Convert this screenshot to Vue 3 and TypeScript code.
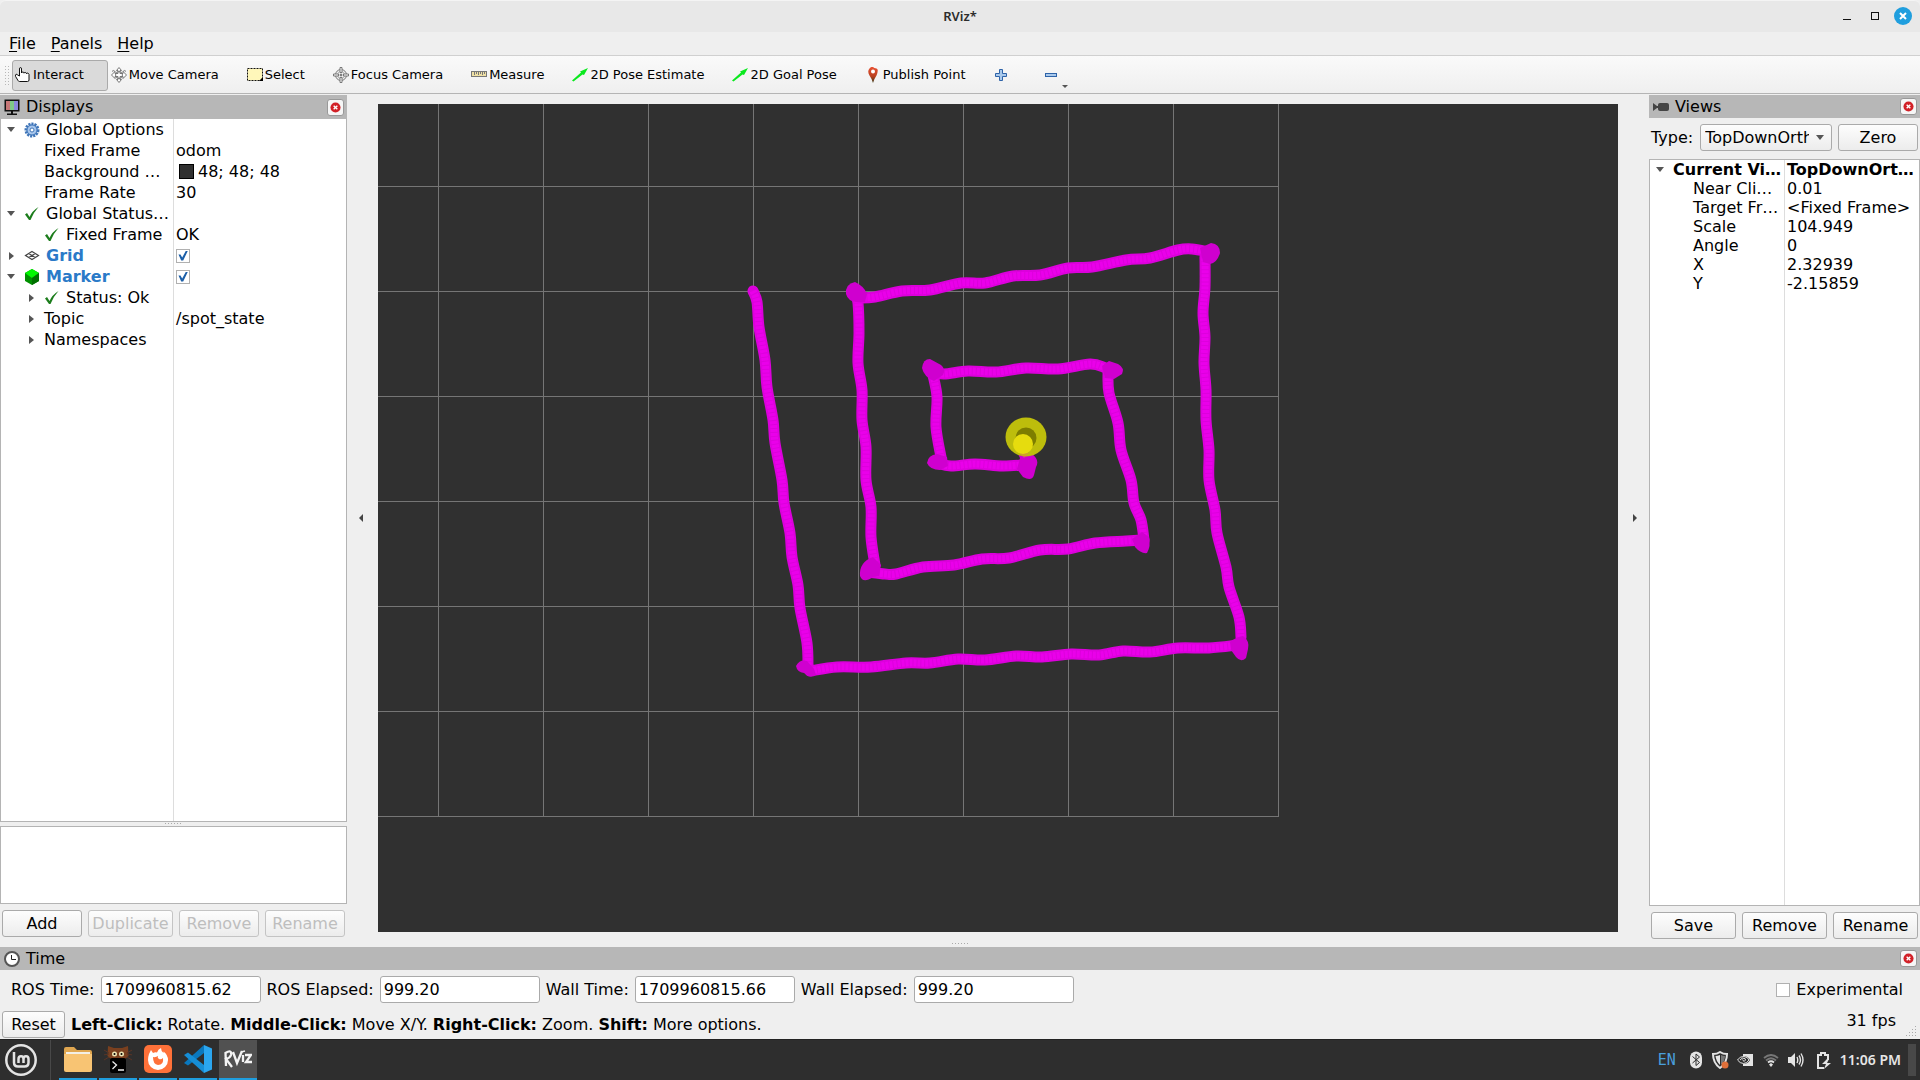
<script setup lang="ts">
import { ref } from 'vue'

interface Tool {
  id: string
  label: string
}

interface Property {
  name: string
  value?: string
  level: number
  arrow?: 'open' | 'closed'
  icon?: 'gear' | 'check' | 'grid' | 'cube'
  link?: boolean
  swatch?: boolean
  checkable?: boolean
}

const tools: Tool[] = [
  { id: 'interact', label: 'Interact' },
  { id: 'move', label: 'Move Camera' },
  { id: 'select', label: 'Select' },
  { id: 'focus', label: 'Focus Camera' },
  { id: 'measure', label: 'Measure' },
  { id: 'pose', label: '2D Pose Estimate' },
  { id: 'pose', label: '2D Goal Pose' },
  { id: 'point', label: 'Publish Point' },
]

const displays: Property[] = [
  { name: 'Global Options', level: 0, arrow: 'open', icon: 'gear' },
  { name: 'Fixed Frame', value: 'odom', level: 1 },
  { name: 'Background …', value: '48; 48; 48', level: 1, swatch: true },
  { name: 'Frame Rate', value: '30', level: 1 },
  { name: 'Global Status…', level: 0, arrow: 'open', icon: 'check' },
  { name: 'Fixed Frame', value: 'OK', level: 1, icon: 'check' },
  { name: 'Grid', level: 0, arrow: 'closed', icon: 'grid', link: true, checkable: true },
  { name: 'Marker', level: 0, arrow: 'open', icon: 'cube', link: true, checkable: true },
  { name: 'Status: Ok', level: 1, arrow: 'closed', icon: 'check' },
  { name: 'Topic', value: '/spot_state', level: 1, arrow: 'closed' },
  { name: 'Namespaces', level: 1, arrow: 'closed' },
]

const viewProps = [
  ['Near Cli…', '0.01'],
  ['Target Fr…', '<Fixed Frame>'],
  ['Scale', '104.949'],
  ['Angle', '0'],
  ['X', '2.32939'],
  ['Y', '-2.15859'],
]

const times = [
  { id: 'ros-time', label: 'ROS Time:', value: '1709960815.62' },
  { id: 'ros-elapsed', label: 'ROS Elapsed:', value: '999.20' },
  { id: 'wall-time', label: 'Wall Time:', value: '1709960815.66' },
  { id: 'wall-elapsed', label: 'Wall Elapsed:', value: '999.20' },
]

const enabled = ref<Record<string, boolean>>({ Grid: true, Marker: true })
const experimental = ref(false)

const gridX = Array.from({ length: 9 }, (_, i) => 60.5 + i * 105)
const gridY = Array.from({ length: 7 }, (_, i) => 82.5 + i * 105)

// Positions of the robot on each leg of the inward spiral.
const legs = [
  '375,187 379,198 381,223 387,256 389,283 395,316 397,339 404,376 406,399 412,429 414,453 420,481 422,504 429,539 430,564',
  '432,567 459,563 493,563 528,559 552,559 580,555 607,556 638,552 664,553 693,550 721,551 745,547 772,548 800,544 831,544 860,541',
  '863,533 861,513 851,483 848,463 839,429 837,406 831,376 831,346 828,316 828,286 826,259 827,233 825,209 827,183 827,153',
  '831,148 814,145 800,146 772,154 748,156 714,163 690,164 662,171 635,172 607,179 583,179 552,186 524,187 497,193 480,194',
  '477,188 480,199 481,229 480,259 484,286 484,316 488,343 488,376 493,403 493,433 497,461',
  '490,468 507,470 518,470 545,463 576,461 604,455 631,454 662,446 690,445 717,439 748,437 764,436',
  '766,436 763,416 756,399 753,376 743,346 740,319 731,289 730,269',
  '736,267 728,264 712,260 680,265 648,264 618,268 590,267 566,270 554,268',
  '555,271 559,293 558,323 563,353',
  '559,359 573,362 597,360 624,362 645,361',
]

const smooth = (points: string): string => {
  const p = points.split(' ').map((s) => s.split(',').map(Number))
  let d = `M${p[0][0]} ${p[0][1]}`
  for (let i = 0; i < p.length - 1; i++) {
    const a = p[Math.max(i - 1, 0)]
    const b = p[i]
    const c = p[i + 1]
    const e = p[Math.min(i + 2, p.length - 1)]
    d += `C${b[0] + (c[0] - a[0]) / 6} ${b[1] + (c[1] - a[1]) / 6} ${c[0] - (e[0] - b[0]) / 6} ${c[1] - (e[1] - b[1]) / 6} ${c[0]} ${c[1]}`
  }
  return d
}

const trail = legs.map(smooth).join('')

// Spots where the robot turned and its markers piled up.
const corners = [
  'M418 562Q422 555 429 557L436 565 438 571Q432 575 426 569 419 568 418 562z',
  'M852 538Q858 533 865 532 872 537 870 545L868 554Q863 559 858 553L853 546z',
  'M822 144L833 139Q842 140 842 149 839 159 832 160L825 158z',
  'M468 190Q467 180 477 178 486 182 489 190L487 198 478 198Q470 197 468 190z',
  'M482 472Q481 458 495 453L503 461 501 472 495 473Q485 480 482 472z',
  'M754 435L764 428 771 433Q773 442 769 449 763 450 757 443z',
  'M544 264Q545 255 552 255L563 261Q568 265 565 271L556 277Q546 273 544 264z',
  'M724 262L731 257 740 260Q747 264 744 270L736 275 727 274z',
  'M549 359Q550 351 559 350L569 353 570 362 562 366Q552 366 549 359z',
  'M637 344L654 350Q662 356 658 363L656 371Q654 378 645 373L639 365 642 354z',
]

const taskApps = ['files', 'kitty', 'firefox', 'code', 'rviz']
const taskNames = ['Files', 'Terminal', 'Firefox', 'Visual Studio Code', 'RViz']
</script>

<template>
  <div class="screen">
    <header class="titlebar">
      <span class="title">RViz*</span>
      <div class="window-buttons">
        <button aria-label="Minimize"><svg width="10" height="12"><path d="M1 9.500h8" stroke="#111" /></svg></button>
        <button aria-label="Maximize"><svg width="10" height="10"><rect x="1.500" y="1.500" width="7" height="7" fill="none" stroke="#111" /></svg></button>
        <button aria-label="Close">
          <svg width="18" height="18"><circle cx="9" cy="9" r="9" fill="#1f9ede" /><path d="M6 6l6 6M12 6l-6 6" stroke="#fff" stroke-width="2" /></svg>
        </button>
      </div>
    </header>

    <nav class="menubar">
      <button><u>F</u>ile</button>
      <button><u>P</u>anels</button>
      <button><u>H</u>elp</button>
    </nav>

    <div class="toolbar">
      <span class="grip"></span>
      <button v-for="(t, i) in tools" :key="i" class="tool" :class="{ pressed: i === 0 }">
        <svg width="16" height="16" viewBox="0 0 16 16">
          <path v-if="t.id === 'interact'" d="M4.500 9V2q0-1.500 1-1.500t1 1.500v4q.2-1 1.300-1t1.200 1.200q.2-1 1.300-.8t1.200 1.400q.2-.9 1.200-.7t1.300 1.300v5.600q0 1.500-1.500 1.500h-8q-1 0-1.500-1L.600 9.500Q0 7.500 1 7.300t1.700.7z" fill="#fff" stroke="#111" />
          <g v-else-if="t.id === 'move'" fill="#fff" stroke="#777">
            <path d="M8 .5l2.500 3H9v3h3v-2l3.500 3.500-3.500 3.500v-2H9v3h1.500L8 15.500l-2.500-3H7v-3H4v2L.5 8 4 4.500v2h3v-3H5.500z" />
            <circle cx="8" cy="8" r="3.500" fill="none" />
            <path d="M1 4.500q1-2 3 0M15 4.500q-1-2-3 0" fill="none" />
          </g>
          <g v-else-if="t.id === 'select'">
            <rect x=".5" y="1.500" width="15" height="12" fill="#fff7ba" stroke="#111" stroke-dasharray="2 1" />
            <path d="M16 10v4h-4z" />
          </g>
          <g v-else-if="t.id === 'focus'" fill="none" stroke="#777">
            <circle cx="8" cy="8" r="5.500" />
            <circle cx="8" cy="8" r="3.500" stroke="#aaa" />
            <path d="M7 .5h2v5H7zM7 10.500h2v5H7zM.5 7h5v2h-5zM10.500 7h5v2h-5z" fill="#fff" />
            <circle cx="8" cy="8" r="1" fill="#777" />
          </g>
          <g v-else-if="t.id === 'measure'">
            <rect x=".5" y="4.500" width="15" height="5" fill="#efe0a4" stroke="#777" />
            <path d="M3.500 5v3M5.500 5v2M7.500 5v3M9.500 5v2M11.500 5v3M13.500 5v2" stroke="#777" />
          </g>
          <path v-else-if="t.id === 'pose'" d="M0 13.500L9 5.500 8 4.500 16 1l-4 7-1.500-.5L1.500 14.500z" fill="#0ae91e" />
          <g v-else>
            <path d="M8 16Q7 12 4.500 8.500 2 4 4.500 1.500T8 0t3.500 1.500T11.500 8.500Q9 12 8 16z" fill="url(#pin)" />
            <circle cx="8" cy="4.500" r="2" fill="#fff" />
            <defs><linearGradient id="pin" x2="0" y2="1"><stop offset="0" stop-color="#ea5234" /><stop offset=".6" stop-color="#b8401f" /><stop offset="1" stop-color="#343b18" /></linearGradient></defs>
          </g>
        </svg>
        <span>{{ t.label }}</span>
      </button>
      <button class="tool only-icon" aria-label="Add tool">
        <svg width="16" height="16"><path d="M6.500 2.500h3v4h4v3h-4v4h-3v-4h-4v-3h4z" fill="#a9c9ec" stroke="#2e63a8" /></svg>
      </button>
      <button class="tool only-icon" aria-label="Remove tool">
        <svg width="16" height="16"><rect x="2.500" y="6.500" width="11" height="3" fill="#a9c9ec" stroke="#2e63a8" /></svg>
        <i class="caret"></i>
      </button>
    </div>

    <main class="workspace">
      <section class="dock left-dock">
        <h2 class="dock-title">
          <svg width="16" height="16">
            <rect x=".5" y=".5" width="15" height="12" fill="#111" />
            <path d="M2 2h4v9H2z" fill="#c77777" /><path d="M6 2h4v9H6z" fill="#80c987" /><path d="M10 2h4v9h-4z" fill="#8b88dc" />
            <path d="M7 12h2v3H7zM3 14.500h10v1.500H3z" fill="#111" />
          </svg>
          <span>Displays</span>
          <button class="close" aria-label="Close Displays"><svg width="11" height="11" viewBox="0 0 12 12"><circle cx="6" cy="6" r="5.500" fill="#d22027" /><path d="M4 4l4 4M8 4l-4 4" stroke="#fff" stroke-width="1.500" /></svg></button>
        </h2>
        <div class="tree display-tree">
          <table>
            <tbody>
              <tr v-for="(p, i) in displays" :key="i">
                <td class="name">
                  <div class="cell" :class="['level-' + p.level, { 'has-icon': p.icon }]">
                    <span class="branch"><i v-if="p.arrow" class="arrow" :class="p.arrow"></i></span>
                    <svg v-if="p.icon" width="16" height="16" viewBox="0 0 16 16">
                      <g v-if="p.icon === 'gear'">
                        <circle cx="8" cy="8" r="6" fill="#9fc0e8" stroke="#3f75b8" stroke-width="3" stroke-dasharray="2 1" />
                        <circle cx="8" cy="8" r="5" fill="#a9c7ec" stroke="#3f75b8" />
                        <circle cx="8" cy="8" r="2" fill="#fff" stroke="#3f75b8" />
                      </g>
                      <path v-else-if="p.icon === 'check'" d="M1 8.500l2-1.500 2.500 4Q8 5 14.500 1 9 7 6.500 14H5z" fill="#1c7d1c" />
                      <g v-else-if="p.icon === 'grid'" fill="none" stroke="#444" stroke-width="1.200">
                        <path d="M8 3.500l6.500 4-6.500 4-6.500-4zM4.700 5.500l6.500 4M11.300 5.500l-6.500 4" />
                      </g>
                      <g v-else>
                        <path d="M8 0l7 4v8l-7 4-7-4V4z" fill="#009000" />
                        <path d="M8 0l7 4-7 5-7-5z" fill="#00f800" />
                        <path d="M8 9l7-5v8l-7 4z" fill="#007000" />
                      </g>
                    </svg>
                    <span :class="{ link: p.link }">{{ p.name }}</span>
                  </div>
                </td>
                <td>
                  <div class="value">
                    <input v-if="p.checkable" v-model="enabled[p.name]" type="checkbox" :aria-label="p.name" />
                    <i v-if="p.swatch" class="swatch"></i>
                    {{ p.value }}
                  </div>
                </td>
              </tr>
            </tbody>
          </table>
        </div>
        <div class="splitter"><i class="dots"></i></div>
        <div class="description"></div>
        <div class="buttons">
          <button>Add</button>
          <button class="wide" disabled>Duplicate</button>
          <button disabled>Remove</button>
          <button disabled>Rename</button>
        </div>
      </section>

      <button class="collapse" aria-label="Hide left panel"><i class="to-left"></i></button>

      <div class="viewport">
        <svg viewBox="0 0 1240 828" preserveAspectRatio="xMidYMid slice">
          <g stroke="#757575">
            <line v-for="x in gridX" :key="'x' + x" :x1="x" :x2="x" y1="0" y2="713" />
            <line v-for="y in gridY" :key="'y' + y" x1="0" x2="901" :y1="y" :y2="y" />
          </g>
          <g fill="none" stroke-linejoin="round">
            <path :d="trail" stroke="#dc00dc" stroke-width="11" stroke-linecap="round" />
            <path :d="trail" stroke="#ea00ea" stroke-width="7" stroke-dasharray="3 1" />
          </g>
          <path v-for="c in corners" :key="c" :d="c" fill="#cf00cf" />
          <ellipse cx="648" cy="333" rx="20.500" ry="19.500" fill="#bdbd0c" />
          <circle cx="648" cy="334" r="10.500" fill="#7d7d00" />
          <path d="M637 344l9 10 5-5z" fill="#e08a4a" opacity=".5" />
          <circle cx="645" cy="340" r="10" fill="#e6dc0e" />
        </svg>
      </div>

      <button class="collapse" aria-label="Hide right panel"><i class="to-right"></i></button>

      <section class="dock right-dock">
        <h2 class="dock-title">
          <svg width="16" height="16"><rect x="5" y="4" width="11" height="8" rx="2" fill="#444" /><path d="M0 4l4 3h2v2H4l-4 3z" fill="#444" /></svg>
          <span>Views</span>
          <button class="close" aria-label="Close Views"><svg width="11" height="11" viewBox="0 0 12 12"><circle cx="6" cy="6" r="5.500" fill="#d22027" /><path d="M4 4l4 4M8 4l-4 4" stroke="#fff" stroke-width="1.500" /></svg></button>
        </h2>
        <div class="type-row">
          <label for="view-type">Type:</label>
          <div class="combo">
            <select id="view-type"><option>TopDownOrtho (rviz_default_plugins)</option></select>
            <i class="arrow open"></i>
          </div>
          <button class="zero">Zero</button>
        </div>
        <div class="tree view-tree">
          <table>
            <tbody>
              <tr class="current">
                <td class="name"><div class="cell level-0"><span class="branch"><i class="arrow open"></i></span><span>Current Vi…</span></div></td>
                <td><div class="value">TopDownOrt…</div></td>
              </tr>
              <tr v-for="p in viewProps" :key="p[0]">
                <td class="name"><div class="cell level-1"><span class="branch"></span><span>{{ p[0] }}</span></div></td>
                <td><div class="value">{{ p[1] }}</div></td>
              </tr>
            </tbody>
          </table>
        </div>
        <div class="buttons equal">
          <button>Save</button>
          <button>Remove</button>
          <button>Rename</button>
        </div>
      </section>
      <i class="dots dock-handle"></i>
    </main>

    <section class="time-dock">
      <h2 class="dock-title">
        <svg width="16" height="16"><circle cx="8" cy="8" r="7" fill="#fff" stroke="#555" stroke-width="2" /><path d="M7.500 4v4.500H12" fill="none" stroke="#222" /></svg>
        <span>Time</span>
        <button class="close" aria-label="Close Time"><svg width="11" height="11" viewBox="0 0 12 12"><circle cx="6" cy="6" r="5.500" fill="#d22027" /><path d="M4 4l4 4M8 4l-4 4" stroke="#fff" stroke-width="1.500" /></svg></button>
      </h2>
      <div class="time-row">
        <template v-for="t in times" :key="t.id">
          <label :for="t.id">{{ t.label }}</label>
          <input :id="t.id" type="text" :value="t.value" readonly />
        </template>
        <label class="experimental"><input v-model="experimental" type="checkbox" />Experimental</label>
      </div>
      <div class="status-row">
        <button>Reset</button>
        <p><b>Left-Click:</b> Rotate. <b>Middle-Click:</b> Move X/Y. <b>Right-Click:</b> Zoom. <b>Shift:</b> More options.</p>
        <span class="fps">31 fps</span>
        <svg class="size-grip" width="12" height="12" fill="#aaa"><path d="M9 0h1v1H9zM6 3h1v1H6zM9 3h1v1H9zM3 6h1v1H3zM6 6h1v1H6zM9 6h1v1H9zM0 9h1v1H0zM3 9h1v1H3zM6 9h1v1H6zM9 9h1v1H9z" /></svg>
      </div>
    </section>

    <footer class="taskbar">
      <button class="start" aria-label="Menu">
        <svg width="32" height="32" viewBox="0 0 32 32" fill="none" stroke="#e4e4e4">
          <circle cx="16" cy="16" r="14.700" stroke-width="2.500" />
          <path d="M9 8v10.500q0 4 4 4h6.500q4 0 4-4V15q0-2.700-2.500-2.700t-2.500 2.700v4M18.500 15q0-2.700-2.500-2.700T13.500 15v4" stroke-width="2.500" />
        </svg>
      </button>
      <button v-for="(a, i) in taskApps" :key="a" class="task" :class="{ active: a === 'rviz' }" :aria-label="taskNames[i]">
        <svg width="28" height="28" viewBox="0 0 28 28">
          <g v-if="a === 'files'">
            <path d="M0 4q0-2 2-2h8l3 3h13q2 0 2 2v8H0z" fill="#dfa650" />
            <path d="M2 7h24v4H2z" fill="#f3efe6" />
            <path d="M0 9h28v16q0 2-2 2H2q-2 0-2-2z" fill="#f8c473" />
          </g>
          <g v-else-if="a === 'kitty'">
            <path d="M4 1l6 2h8l6-2 .5 10-3.500 3H7l-3.500-3z" fill="#7a401f" />
            <path d="M0 5l5 3M-1 10l6-1M0 15l5-3M28 5l-5 3M29 10l-6-1M28 15l-5-3" stroke="#5a3526" />
            <circle cx="10.500" cy="9" r="2.500" fill="#ece4b4" /><circle cx="17.500" cy="9" r="2.500" fill="#ece4b4" />
            <circle cx="10.500" cy="9" r="1" /><circle cx="17.500" cy="9" r="1" />
            <rect x="6" y="13" width="16" height="15" rx="2" fill="#000" />
            <path d="M8.500 16.500l4 3.500-4 4M14 25h6" fill="none" stroke="#eee" stroke-width="1.300" />
          </g>
          <g v-else-if="a === 'firefox'">
            <rect width="28" height="28" rx="5" fill="#ff7139" />
            <path d="M5 9q1-2 2-4l2 3q2-1 4-.5Q14 4 17 3q0 3 2.500 5V6.500Q24 10 24 15a10 10 0 0 1-20 0q0-3 1-6z" fill="#fff" />
            <path d="M9 12q3 .5 5-1-1 2 1 3t4-1q1 7-5 7-5-.5-5-8z" fill="#ff7139" />
          </g>
          <g v-else-if="a === 'code'">
            <path d="M20 0v8L4 20.500 0 18z" fill="#0a78be" />
            <path d="M0 10l4-2.500L20 20v8z" fill="#168ed6" />
            <path d="M20 0l8 3.500v21L20 28z" fill="#2ba6ef" />
          </g>
          <g v-else fill="none" stroke="#f4f4f4" stroke-width="2.300">
            <path d="M2 21L1.500 8Q8 4 7 10q-1 3-5 4l6 8M9 7l4 11 5-12M19 10v7M21 10h6l-5 7h6" />
            <path d="M17 7l4-1" stroke-width="1.500" />
          </g>
        </svg>
      </button>
      <div class="tray">
        <span class="lang">EN</span>
        <svg class="bt" width="12" height="18" viewBox="0 0 12 18"><rect width="12" height="17" y=".5" rx="6" fill="#e4e4e4" /><path d="M2.500 5.500l7 6L6 14.500V3l3.500 3-7 6" fill="none" stroke="#2e2e2e" /></svg>
        <svg class="shield" width="18" height="18" viewBox="0 0 18 18"><path d="M9 1q3 2 7 2 0 9-7 14Q2 12 2 3q4 0 7-2z" fill="none" stroke="#e4e4e4" stroke-width="2" /><path d="M9 4v10Q5 10 4.500 5 7 5 9 4z" fill="#e4e4e4" /><path d="M10 4v10q4-4 4-9-2 0-4-1z" fill="#777" /><circle cx="14" cy="14" r="3.500" fill="#e0703a" /></svg>
        <svg class="nv" width="16" height="14" viewBox="0 0 16 14"><path d="M6 1h10v12H6V11q5 0 7-4-2-4-7-4z" fill="#e4e4e4" /><path d="M.5 7Q3 3 7 3.500T12 7Q10 10.500 6.500 10.500T.5 7zM3 7q2-3 5-1.500Q9.500 7 7 8.500L5.500 6.500" fill="none" stroke="#e4e4e4" /></svg>
        <svg class="wifi" width="16" height="14" viewBox="0 0 16 14" fill="none" stroke-width="1.800"><path d="M1 5q7-6 14 0M3 7.500q5-4.500 10 0" stroke="#777" /><path d="M5 9.500q3-2.500 6 0" stroke="#e4e4e4" /><path d="M8 10l2 1.500L8 14l-2-2.500z" fill="#e4e4e4" /></svg>
        <svg class="vol" width="16" height="16" viewBox="0 0 16 16"><path d="M0 5h3l4-4v14l-4-4H0z" fill="#e4e4e4" /><path d="M9 5q1.500 3 0 6M11 3.500q3 4.500 0 9M13 1.500q4 6.500 0 13" fill="none" stroke="#e4e4e4" stroke-width="1.400" /></svg>
        <svg class="bat" width="14" height="17" viewBox="0 0 14 17"><path d="M7 16H1V3h3V1h4v2h3v5" fill="none" stroke="#e4e4e4" stroke-width="2" /><path d="M10 7l-5 5h4l-2 5 7-6h-4l2-4z" fill="#e4e4e4" /></svg>
        <time>11:06 PM</time>
        <button class="show-desktop" aria-label="Show desktop"></button>
      </div>
    </footer>
  </div>
</template>

<style>
body {
  margin: 0;
  background: #efefef;
}
</style>

<style scoped>
* {
  box-sizing: border-box;
}
.screen {
  display: flex;
  flex-direction: column;
  min-height: 100vh;
  background: #efefef;
  color: #000;
  font: 16px/20px "DejaVu Sans", sans-serif;
}
button,
input,
select {
  font: inherit;
  color: inherit;
  margin: 0;
}
button {
  padding: 0;
  border: 0;
  background: none;
}
svg {
  display: block;
  flex: none;
}
h2,
p {
  margin: 0;
  font-size: 16px;
  font-weight: 400;
}

.titlebar {
  display: grid;
  grid-template-columns: 1fr auto 1fr;
  align-items: center;
  height: 32px;
  padding-bottom: 1px;
  background: #e8e8e8;
  border-top: 1px solid #f4f4f4;
  border-radius: 6px 6px 0 0;
}
.title {
  grid-column: 2;
  font: 600 13px/18px "Noto Sans", sans-serif;
  color: #2c2c2c;
}
.window-buttons {
  display: flex;
  justify-content: flex-end;
  align-items: center;
  gap: 18px;
  padding-right: 8px;
}
.window-buttons button:last-child {
  margin-left: -4px;
}

.menubar {
  display: flex;
  gap: 1px;
  height: 24px;
  padding-left: 2px;
  border-bottom: 1px solid #d0d0d0;
}
.menubar button {
  padding: 0 7px;
}
u {
  text-underline-offset: 2px;
}

.toolbar {
  display: flex;
  align-items: center;
  height: 38px;
  padding: 1px 0 0 4px;
  background: linear-gradient(#fafafa, #efefef);
  border-bottom: 1px solid #b4b4b4;
}
.grip {
  width: 6px;
  height: 20px;
  margin-right: 2px;
  background: radial-gradient(circle, #b8b8b8 1px, transparent 1px) 0 0 / 3px 3px;
}
.tool {
  position: relative;
  display: flex;
  align-items: center;
  gap: 2px;
  height: 31px;
  margin-right: 1px;
  padding: 0 23px 0 2px;
  border: 1px solid transparent;
  border-radius: 3px;
  font-size: 13px;
}
.tool.pressed {
  margin-right: 0;
  background: #dadada;
  border-color: #aaa;
}
.tool.only-icon {
  padding-right: 29px;
}
.caret {
  position: absolute;
  right: 20px;
  bottom: 2px;
  border: 3px solid transparent;
  border-top-color: #555;
  border-bottom: 0;
}

.workspace {
  position: relative;
  display: flex;
  flex: 1;
  padding-top: 1px;
}
.dock {
  display: flex;
  flex-direction: column;
  flex: none;
}
.left-dock {
  width: 347px;
  padding-bottom: 10px;
}
.right-dock {
  width: 271px;
  padding-bottom: 8px;
}
.dock-title {
  display: flex;
  align-items: center;
  gap: 6px;
  height: 23px;
  padding: 0 3px 0 4px;
  background: #b7b7b7;
}
.left-dock .dock-title {
  height: 24px;
}
.close {
  display: grid;
  place-items: center;
  width: 17px;
  height: 17px;
  margin-left: auto;
  background: #f6f6f6;
  border: 1px solid #999;
  border-radius: 3px;
}
.tree {
  flex: 1;
  border: 1px solid #b4b4b4;
}
.display-tree {
  border-top: 0;
  background: linear-gradient(#ddd, #ddd) 172px 0 / 1px 100% no-repeat #fff;
}
.view-tree {
  background: linear-gradient(#ddd, #ddd) 134px 0 / 1px 100% no-repeat #fff;
}
table {
  width: 100%;
  table-layout: fixed;
  border-collapse: collapse;
}
td {
  height: 21px;
  padding: 0;
  white-space: nowrap;
}
.view-tree td {
  height: 19px;
  line-height: 19px;
}
.display-tree .name {
  width: 173px;
}
.view-tree .name {
  width: 135px;
}
.cell {
  display: flex;
  align-items: center;
}
.branch {
  display: flex;
  justify-content: center;
  width: 20px;
  margin-right: 3px;
}
.cell svg {
  margin-right: 6px;
}
.level-1 .branch {
  margin-left: 20px;
}
.current {
  font-weight: 700;
}
.arrow {
  display: block;
  border: 4px solid transparent;
}
.arrow.open {
  border-top: 5px solid #555;
  border-bottom: 0;
}
.arrow.closed {
  border-left: 5px solid #555;
  border-right: 0;
}
.link {
  color: #2a7ac8;
  font-weight: 700;
}
.value {
  display: flex;
  align-items: center;
  padding-left: 2px;
}
.swatch {
  width: 15px;
  height: 15px;
  margin: 0 4px 0 3px;
  background: #303030;
  border: 1px solid #000;
}
input[type='checkbox'] {
  appearance: none;
  width: 14px;
  height: 14px;
  background: #fff;
  border: 1px solid #b0b0b0;
}
input[type='checkbox']:checked::after {
  content: '';
  display: block;
  width: 10px;
  height: 10px;
  margin: 1px;
  background: #1c5fa8;
  clip-path: polygon(5% 40%, 25% 40%, 42% 70%, 80% 0, 100% 0, 52% 100%, 32% 100%);
}
.splitter {
  display: flex;
  justify-content: center;
  height: 4px;
  padding-top: 1px;
}
.dots {
  width: 17px;
  height: 1px;
  background: repeating-linear-gradient(90deg, #aaa 0 1px, transparent 1px 3px);
}
.dock-handle {
  position: absolute;
  left: 50%;
  bottom: 3px;
  margin-left: -8px;
}
.description {
  height: 78px;
  background: #fff;
  border: 1px solid #b4b4b4;
}
.buttons {
  display: flex;
  gap: 6px;
  padding: 6px 2px 0;
}
.buttons button {
  flex: 80 1 0;
}
.buttons .wide {
  flex-grow: 85;
}
.buttons button,
.zero,
.status-row button {
  height: 27px;
  background: linear-gradient(#fdfdfd, #ececec);
  border: 1px solid #aaa;
  border-radius: 3px;
}
.buttons button:disabled {
  color: #bebebe;
  border-color: #c4c4c4;
}

.collapse {
  display: grid;
  place-items: center;
  flex: none;
  width: 31px;
  margin: 9px 0 15px;
}
.to-left,
.to-right {
  border: 4px solid transparent;
}
.to-left {
  border-right-color: #444;
  border-left: 0;
  margin-right: 3px;
}
.to-right {
  border-left-color: #444;
  border-right: 0;
  margin-left: 2px;
}
.viewport {
  display: flex;
  flex: 1;
  min-width: 0;
  margin: 9px 0 15px;
  background: #303030;
}
.viewport svg {
  flex: 1;
  min-width: 0;
}

.type-row {
  display: flex;
  align-items: center;
  gap: 6px;
  padding: 6px 2px 8px;
}
.combo {
  display: flex;
  align-items: center;
  flex: 1;
  min-width: 0;
  height: 27px;
  margin-left: 1px;
  padding: 0 7px 0 4px;
  background: linear-gradient(#fdfdfd, #ececec);
  border: 1px solid #aaa;
  border-radius: 3px;
}
select {
  flex: 1;
  min-width: 0;
  margin-right: 7px;
  padding: 0;
  appearance: none;
  background: none;
  border: 0;
}
.zero {
  width: 80px;
}

.time-row {
  display: flex;
  align-items: center;
  gap: 6px;
  padding: 6px 17px 0 11px;
}
.time-row input[type='text'] {
  width: 160px;
  height: 27px;
  padding: 0 3px;
  background: #fff;
  border: 1px solid #aaa;
  border-radius: 3px;
}
.experimental {
  display: flex;
  align-items: center;
  gap: 6px;
  margin-left: auto;
}
.status-row {
  display: flex;
  align-items: center;
  padding: 8px 2px 1px;
}
.status-row button {
  width: 63px;
}
.status-row p {
  margin-left: 6px;
}
.fps {
  align-self: flex-start;
  margin: 0 10px 0 auto;
}
.size-grip {
  align-self: flex-end;
}

.taskbar {
  display: flex;
  height: 41px;
  background: #2e2e2e;
  border-top: 1px solid #222;
}
.start {
  display: grid;
  align-content: center;
  width: 51px;
  margin-right: 8px;
  padding-left: 5px;
  border-right: 1px solid #484848;
}
.task {
  display: grid;
  place-items: center;
  width: 38px;
  margin-right: 2px;
  border-bottom: 2px solid #1f9ede;
}
.task.active {
  background: #515151;
}
.tray {
  display: flex;
  align-items: center;
  margin-left: auto;
  padding-right: 4px;
}
.lang {
  margin-right: 14px;
  font: 15px/20px "DejaVu Sans Mono", monospace;
  color: #4a9fdc;
}
.bt {
  margin-right: 9px;
}
.shield {
  margin-right: 8px;
}
.nv {
  margin-right: 10px;
}
.wifi {
  margin-right: 9px;
}
.vol {
  margin-right: 13px;
}
.bat {
  margin-right: 9px;
}
time {
  margin-right: 7px;
  font: 600 14px/18px "Noto Sans", sans-serif;
  color: #e6e6e6;
}
.show-desktop {
  width: 8px;
  height: 32px;
  background: #484848;
}
</style>
